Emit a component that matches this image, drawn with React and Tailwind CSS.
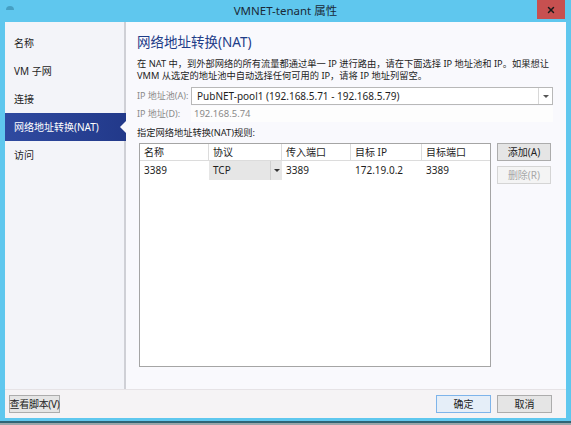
import { X } from 'lucide-react';

const font = { fontFamily: '"Noto Sans", "Noto Sans CJK SC", sans-serif' };

const navItems = ['名称', 'VM 子网', '连接', '网络地址转换(NAT)', '访问'];

function Btn({ children, disabled, primary, className = '' }) {
  return (
    <div
      className={`flex h-[18px] items-center justify-center whitespace-nowrap border text-[10px] ${
        disabled
          ? 'border-[#d5d5d5] bg-[#f4f4f4] text-[#a8a8a8]'
          : primary
            ? 'border-[#7eb4ea] bg-[#e5eef8] text-[#222]'
            : 'border-[#acacac] bg-[#e5e5e5] text-[#222]'
      } ${className}`}
    >
      {children}
    </div>
  );
}

export default function App() {
  const cols = [
    { w: 'w-[69px]', label: '名称' },
    { w: 'w-[73px]', label: '协议' },
    { w: 'w-[69px]', label: '传入端口' },
    { w: 'w-[71px]', label: '目标 IP' },
    { w: 'flex-1', label: '目标端口' },
  ];

  return (
    <div
      className="flex h-[425px] w-[571px] flex-col overflow-hidden bg-[#5fc7ee] text-[#1e1e1e]"
      style={font}
    >
      {/* title bar */}
      <div className="relative flex h-[22px] shrink-0 items-center justify-center">
        <div className="absolute left-[6px] top-[6px] h-[4px] w-[8px] rounded-t-full bg-[#3a8fb0] opacity-70" />
        <span className="whitespace-nowrap text-[11.5px] text-[#1a2a38]">VMNET-tenant 属性</span>
        <div className="absolute right-[6px] top-0 flex h-[19px] w-[28px] items-center justify-center bg-[#c75050]">
          <X size={10} strokeWidth={3.5} className="text-[#1a1a1a]" />
        </div>
      </div>

      {/* body */}
      <div className="mx-[5px] flex min-h-0 flex-1 flex-col bg-[#f9f9fd]">
        <div className="flex min-h-0 flex-1">
          {/* sidebar */}
          <div className="flex w-[121px] shrink-0 flex-col border-r-2 border-[#cfd0d6] bg-[#f3f4f9] pt-[7px]">
            {navItems.map((item) => {
              const active = item === '网络地址转换(NAT)';
              return (
                <div
                  key={item}
                  className={`relative -mr-[2px] flex h-[28px] items-center whitespace-nowrap pl-[9px] text-[10px] ${
                    active ? 'bg-gradient-to-r from-[#2f4aa0] to-[#22398a] text-white' : 'text-[#1e1e1e]'
                  }`}
                >
                  {item}
                  {active && (
                    <div className="absolute right-0 top-[8px] h-0 w-0 border-y-[6px] border-r-[6px] border-y-transparent border-r-[#f9f9fd]" />
                  )}
                </div>
              );
            })}
          </div>

          {/* main */}
          <div className="flex min-w-0 flex-1 flex-col pl-[11px] pr-[13px] pt-[10px]">
            <div className="whitespace-nowrap text-[13.5px] leading-[20px] text-[#1e3c88]">网络地址转换(NAT)</div>
            <div className="mt-[6px] whitespace-nowrap text-[9.25px] leading-[12px] text-[#1e1e1e]">
              在 NAT 中，到外部网络的所有流量都通过单一 IP 进行路由，请在下面选择 IP 地址池和 IP。如果想让
              <br />
              VMM 从选定的地址池中自动选择任何可用的 IP，请将 IP 地址列留空。
            </div>

            <div className="mt-[5px] flex items-center">
              <span className="w-[54px] shrink-0 whitespace-nowrap text-[9px] text-[#8a8a8a]">IP 地址池(A):</span>
              <div className="flex h-[18px] min-w-0 flex-1 items-center border border-[#b8b8b8] bg-white">
                <span className="flex-1 whitespace-nowrap pl-[5px] text-[10px] text-[#1e1e1e]">
                  PubNET-pool1 (192.168.5.71 - 192.168.5.79)
                </span>
                <div className="flex h-full w-[14px] items-center justify-center border-l border-[#d8d8d8]">
                  <div className="h-0 w-0 border-x-[3px] border-t-[3px] border-x-transparent border-t-[#555]" />
                </div>
              </div>
            </div>

            <div className="mt-[1px] flex items-center">
              <span className="w-[54px] shrink-0 whitespace-nowrap text-[9px] text-[#8a8a8a]">IP 地址(D):</span>
              <div className="flex h-[16px] flex-1 items-center bg-[#fdfdfd] pl-[3px] text-[9.5px] text-[#8a8a8a]">
                192.168.5.74
              </div>
            </div>

            <div className="mt-[4px] whitespace-nowrap text-[9.25px] leading-[14px]">指定网络地址转换(NAT)规则:</div>

            <div className="mt-[3px] flex min-h-0 flex-1 gap-[6px] pb-[22px] pl-[2px]">
              {/* table */}
              <div className="flex w-[352px] flex-col border border-[#a5a5a5] bg-white">
                <div className="flex h-[17px] border-b border-[#dcdcdc]">
                  {cols.map((c, i) => (
                    <div
                      key={c.label}
                      className={`${c.w} flex items-center whitespace-nowrap pl-[4px] text-[10px] ${
                        i < cols.length - 1 ? 'border-r border-[#dcdcdc]' : ''
                      }`}
                    >
                      {c.label}
                    </div>
                  ))}
                </div>
                <div className="flex h-[19px] text-[10px]">
                  <div className="flex w-[69px] items-center pl-[4px]">3389</div>
                  <div className="flex w-[73px] items-center bg-[#e6e6e6] pl-[4px]">
                    <span className="flex-1">TCP</span>
                    <div className="flex h-full w-[12px] items-center justify-center border-l border-[#cfcfcf]">
                      <div className="h-0 w-0 border-x-[3px] border-t-[3px] border-x-transparent border-t-[#333]" />
                    </div>
                  </div>
                  <div className="flex w-[69px] items-center pl-[4px]">3389</div>
                  <div className="flex w-[71px] items-center pl-[4px]">172.19.0.2</div>
                  <div className="flex flex-1 items-center pl-[4px]">3389</div>
                </div>
              </div>

              <div className="flex flex-col gap-[5px]">
                <Btn className="w-[54px]">添加(A)</Btn>
                <Btn disabled className="w-[54px]">删除(R)</Btn>
              </div>
            </div>
          </div>
        </div>

        {/* footer */}
        <div className="flex h-[29px] shrink-0 items-center justify-between border-t border-[#e6e3e6] bg-[#f5f3f5] pl-[4px] pr-[14px]">
          <Btn className="w-[51px] text-[9px] tracking-[-0.3px]">查看脚本(V)</Btn>
          <div className="flex gap-[6px]">
            <Btn primary className="w-[55px]">确定</Btn>
            <Btn className="w-[55px]">取消</Btn>
          </div>
        </div>
      </div>

      <div className="h-[3px] shrink-0" />
      <div className="h-[2px] shrink-0 bg-[#2f6475]" />
      <div className="h-[2px] shrink-0 bg-[#9aa6aa]" />
    </div>
  );
}
